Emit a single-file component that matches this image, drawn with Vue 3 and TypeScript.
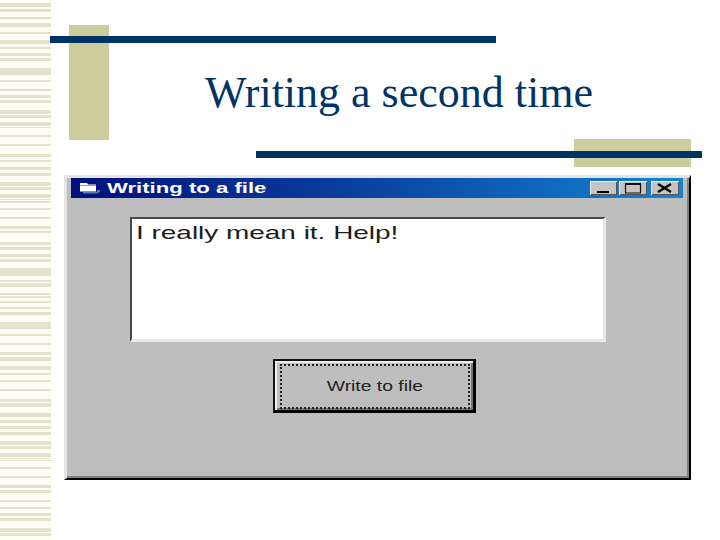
<script setup lang="ts">
import { computed } from 'vue'

const bands: [number, number][] = [
  [3,7],[9,12],[17,19],[23,27],[32,34],[40,44],[47,49],[53,56],[58,61],[68,75],[80,82],[89,91],[95,98],[100,103],
  [110,114],[115,118],[122,126],[127,128],[135,137],[144,146],[154,157],[160,162],[167,170],[173,176],[182,186],
  [187,190],[194,198],[199,200],[201,203],[208,210],[217,219],[226,229],[231,233],[242,245],[247,250],[254,257],
  [259,262],[268,276],[280,282],[283,287],[293,295],[296,298],[301,303],[307,309],[312,315],[322,329],[334,336],
  [343,345],[352,355],[357,361],[366,370],[373,375],[380,382],[389,391],[399,402],[403,407],[413,417],[420,423],
  [426,429],[432,435],[441,445],[446,449],[453,457],[458,459],[460,461],[467,469],[476,478],[485,488],[490,493],
  [500,502],[507,509],[513,516],[518,521],[528,532],[533,536],
]
const paper = '#fefef6'
const ink = '#e3e3cd'

const stripeStyle = computed(() => {
  const stops: string[] = []
  let y = 0
  for (const [a, b] of bands) {
    stops.push(`${paper} ${y}px ${a}px`, `${ink} ${a}px ${b}px`)
    y = b
  }
  stops.push(`${paper} ${y}px 540px`)
  return { background: `linear-gradient(to bottom, ${stops.join(', ')})` }
})
</script>

<template>
  <div class="slide">
    <div class="stripes" :style="stripeStyle"></div>
    <main class="main">
      <header class="head">
        <span class="orn block-a"></span>
        <span class="orn rule-a"></span>
        <span class="orn block-b"></span>
        <span class="orn rule-b"></span>
        <h1 class="title">Writing a second time</h1>
      </header>
      <section class="window">
        <div class="titlebar">
          <svg class="folder" width="21" height="12" viewBox="0 0 21 12">
            <path d="M1 1h7l1 1.5h8V9.5H1z" fill="#ffffff" />
            <path d="M1 3.5h16" stroke="#8a9ac0" stroke-width="1" />
            <path d="M4 10h13.5l1-2H21v1.5L18.5 11.5H4z" fill="#6b7ba8" />
          </svg>
          <span class="caption">Writing to a file</span>
          <div class="controls">
            <span class="ctl ctl-min">
              <svg width="27" height="14" viewBox="0 0 27 14"><path d="M7 11h12" stroke="#000" stroke-width="2" /></svg>
            </span>
            <span class="ctl ctl-max">
              <svg width="28" height="14" viewBox="0 0 28 14"><path d="M6.5 3h15v9h-15z" fill="none" stroke="#111" stroke-width="1.2" /><path d="M6 3h16" stroke="#111" stroke-width="2" /></svg>
            </span>
            <span class="ctl ctl-close">
              <svg width="28" height="14" viewBox="0 0 28 14"><path d="M7 3l13 8M20 3L7 11" stroke="#000" stroke-width="2.2" /></svg>
            </span>
          </div>
        </div>
        <div class="client">
          <div class="textbox"><span class="typed">I really mean it. Help!</span></div>
          <button class="action" type="button">
            <span class="focus"><span class="label">Write to file</span></span>
          </button>
        </div>
      </section>
    </main>
  </div>
</template>

<style scoped>
.slide {
  width: 720px;
  height: 540px;
  display: flex;
  background: #ffffff;
  overflow: hidden;
}
.stripes {
  width: 51px;
  flex: none;
}
.main {
  flex: 1;
  min-width: 0;
}
.head {
  position: relative;
  height: 175px;
  padding: 66px 0 0 154px;
  box-sizing: border-box;
}
.orn {
  position: absolute;
  display: block;
}
.block-a {
  left: 18px;
  top: 25px;
  width: 40px;
  height: 115px;
  background: #cccc9c;
}
.rule-a {
  left: -1px;
  top: 36px;
  width: 446px;
  height: 7px;
  background: #003366;
}
.block-b {
  left: 523px;
  top: 139px;
  width: 117px;
  height: 28px;
  background: #cccc9c;
}
.rule-b {
  left: 205px;
  top: 151px;
  width: 446px;
  height: 7px;
  background: #003366;
}
.title {
  position: relative;
  margin: 0;
  font: 400 44px/54px "Liberation Serif", serif;
  color: #003366;
  white-space: nowrap;
}
.window {
  margin-left: 13px;
  width: 627px;
  height: 305px;
  box-sizing: border-box;
  background: #bebebe;
  border-style: solid;
  border-width: 3px 2px 2px 3px;
  border-color: #e4e4e4 #000000 #000000 #e4e4e4;
  box-shadow: inset -2px -2px 0 #808080;
  padding: 0 6px 0 4px;
}
.titlebar {
  height: 20px;
  display: flex;
  align-items: center;
  padding-left: 8px;
  background: linear-gradient(to right, #00107f, #0a3f9c 45%, #1284d2);
  color: #ffffff;
}
.folder {
  flex: none;
}
.caption {
  margin-left: 7px;
  font: 700 14px/20px "Liberation Sans", sans-serif;
  white-space: nowrap;
  transform: scaleX(1.58);
  transform-origin: left center;
}
.controls {
  margin-left: auto;
  margin-right: 4px;
  display: flex;
}
.ctl {
  display: block;
  height: 14px;
  background: #c4c4c4;
  box-shadow: inset 1px 1px 0 #eeeeee, inset -1px -1px 0 #555555;
}
.ctl svg {
  display: block;
}
.ctl-min { width: 27px; }
.ctl-max { width: 28px; margin-left: 2px; }
.ctl-close { width: 28px; margin-left: 4px; }
.client {
  padding: 19px 0 0 59px;
}
.textbox {
  width: 476px;
  height: 125px;
  box-sizing: border-box;
  background: #ffffff;
  border-style: solid;
  border-width: 2px 3px 3px 2px;
  border-color: #4a4a4a #e8e8e8 #e8e8e8 #4a4a4a;
  padding: 3px 0 0 4px;
}
.typed {
  display: block;
  font: 400 19px/22px "Liberation Sans", sans-serif;
  color: #1c1c1c;
  white-space: nowrap;
  transform: scaleX(1.47);
  transform-origin: left center;
}
.action {
  display: block;
  margin: 17px 0 0 143px;
  width: 203px;
  height: 54px;
  padding: 0;
  box-sizing: border-box;
  background: #bebebe;
  border-style: solid;
  border-width: 2px 3px 3px 2px;
  border-color: #111111 #000000 #000000 #111111;
  box-shadow: inset 2px 2px 0 #eeeeee, inset -2px -2px 0 #777777;
}
.focus {
  display: flex;
  align-items: center;
  justify-content: center;
  box-sizing: border-box;
  height: 45px;
  margin: 2px 3px 0 5px;
  padding-bottom: 2px;
  border: 2px dotted #222222;
}
.label {
  font: 400 14px/16px "Liberation Sans", sans-serif;
  color: #222222;
  transform: scaleX(1.38);
}
</style>
